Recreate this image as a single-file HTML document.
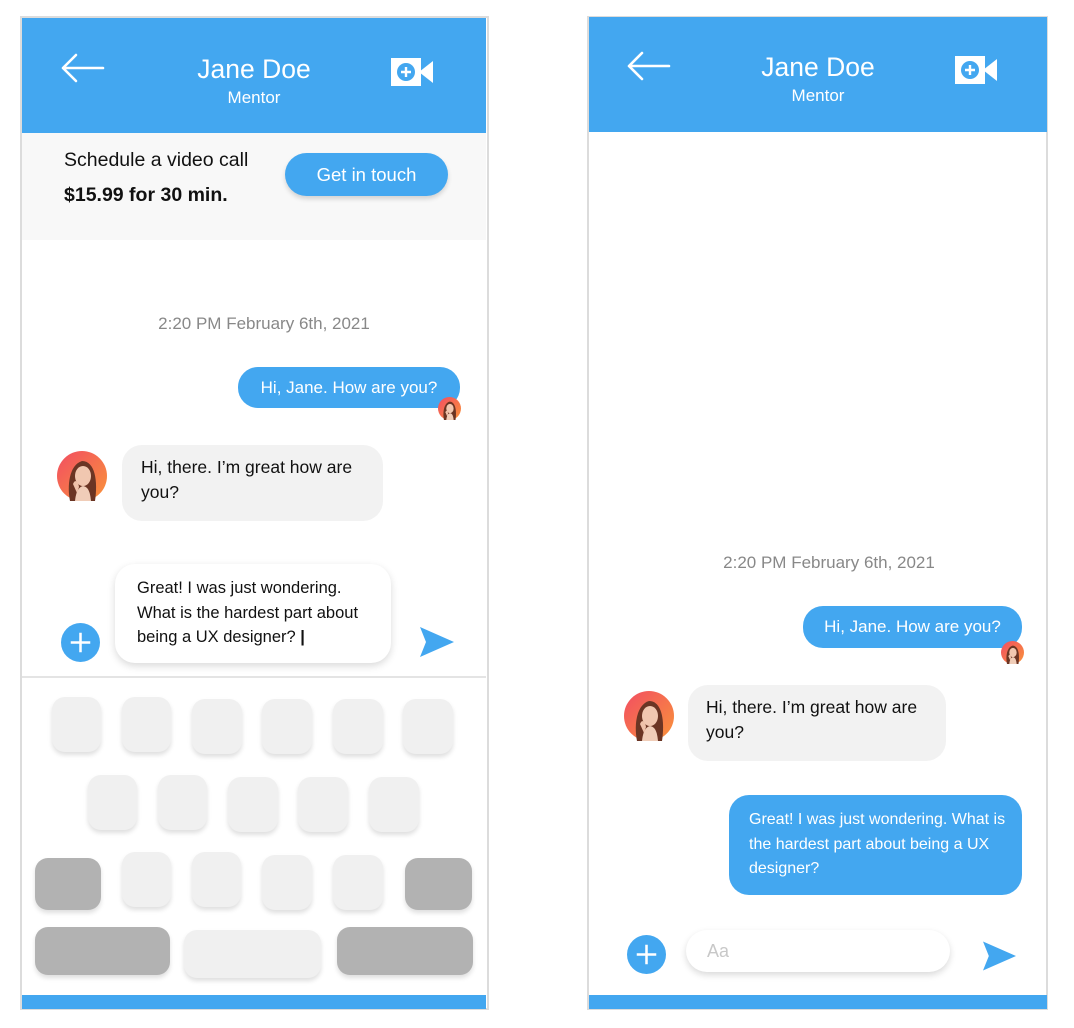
<!DOCTYPE html>
<html><head><meta charset="utf-8"><style>
*{margin:0;padding:0;box-sizing:border-box}
body{width:1074px;height:1028px;background:#fff;position:relative;overflow:hidden;font-family:"Liberation Sans",sans-serif}
.a{position:absolute}
.frame{position:absolute;border:2px solid #dcdcdc;background:#fff}
.blue{background:#43a7f0}
.t{position:absolute;white-space:nowrap}
.title{color:#fff;font-size:26.5px;text-align:center;width:200px}
.sub{color:#fff;font-size:17px;text-align:center;width:200px}
.key{position:absolute;background:#f0f0f0;border-radius:13px;box-shadow:0 3px 5px rgba(0,0,0,.13)}
.gk{background:#b2b2b2}
.bub{position:absolute;border-radius:20px;font-size:17.5px;line-height:25px;white-space:nowrap}
</style></head><body>
<svg width="0" height="0" style="position:absolute"><defs>
<linearGradient id="ag" x1="0" y1="0" x2="1" y2="1"><stop offset="0" stop-color="#f24d62"/><stop offset="1" stop-color="#f9943a"/></linearGradient>
<symbol id="av" viewBox="0 0 50 50"><circle cx="25" cy="25" r="25" fill="url(#ag)"/><path d="M13 50 C10 35 12 14 25 10 C38 10 41 30 38 50Z" fill="#6b3524"/><ellipse cx="26" cy="25" rx="8" ry="10" fill="#f1c7b0"/><path d="M18 50 C19 40 22 36 26 35 C31 36 33 40 34 50Z" fill="#f0cdb8"/><path d="M16 33 C18 28 21 30 22 36 L20 42Z" fill="#efc2aa"/></symbol>
<symbol id="cam" viewBox="0 0 42 28"><rect x="0" y="0" width="30" height="28" fill="#fff"/><path d="M28 14 L42 3 L42 25Z" fill="#fff"/><circle cx="15" cy="14" r="9" fill="#43a7f0"/><path d="M15 9v10M10 14h10" stroke="#fff" stroke-width="2.4"/></symbol>
<symbol id="back" viewBox="0 0 44 30"><path d="M2 15H42M15 2L2 15L15 28" fill="none" stroke="#fff" stroke-width="2.6" stroke-linecap="round" stroke-linejoin="round"/></symbol>
<symbol id="send" viewBox="0 0 34 30"><path d="M0 0L34 15L0 30L6 15Z" fill="#43a7f0"/></symbol>
<symbol id="plus" viewBox="0 0 40 40"><circle cx="20" cy="20" r="20" fill="#43a7f0"/><path d="M20 10v20M10 20h20" stroke="#fff" stroke-width="2.6"/></symbol>
</defs></svg>

<!-- LEFT PHONE -->
<div class="frame" style="left:20px;top:16px;width:469px;height:994px"></div>
<div class="a blue" style="left:22px;top:18px;width:464px;height:115px"></div>
<svg class="a" style="left:61px;top:53px" width="44" height="30"><use href="#back"/></svg>
<div class="t title" style="left:154px;top:54px">Jane Doe</div>
<div class="t sub" style="left:154px;top:88px">Mentor</div>
<svg class="a" style="left:391px;top:58px" width="42" height="28"><use href="#cam"/></svg>
<div class="a" style="left:22px;top:133px;width:464px;height:107px;background:#f8f8f8"></div>
<div class="t" style="left:64px;top:149px;font-size:19.5px;color:#111">Schedule a video call</div>
<div class="t" style="left:64px;top:184px;font-size:19.5px;font-weight:bold;color:#111">$15.99 for 30 min.</div>
<div class="a blue" style="left:285px;top:153px;width:163px;height:43px;border-radius:22px;box-shadow:0 3px 5px rgba(0,0,0,.15);color:#fff;font-size:18.5px;text-align:center;line-height:43px">Get in touch</div>
<div class="t" style="left:134px;top:314px;width:260px;text-align:center;color:#888;font-size:17px">2:20 PM February 6th, 2021</div>
<div class="bub blue" style="left:238px;top:367px;width:222px;height:41px;color:#fff;text-align:center;line-height:41px;font-size:17px">Hi, Jane. How are you?</div>
<svg class="a" style="left:438px;top:397px" width="23" height="23"><use href="#av"/></svg>
<svg class="a" style="left:57px;top:451px" width="50" height="50"><use href="#av"/></svg>
<div class="bub" style="left:122px;top:445px;width:261px;height:76px;background:#f2f2f2;color:#111;padding:10px 19px">Hi, there. I’m great how are<br>you?</div>
<div class="bub" style="left:115px;top:564px;width:276px;height:99px;background:#fff;box-shadow:0 3px 8px rgba(0,0,0,.15);color:#111;font-size:16.5px;line-height:24.5px;padding:12px 22px">Great! I was just wondering.<br>What is the hardest part about<br>being a UX designer? <b>|</b></div>
<svg class="a" style="left:61px;top:623px" width="39" height="39"><use href="#plus"/></svg>
<svg class="a" style="left:420px;top:627px" width="34" height="30"><use href="#send"/></svg>
<div class="a" style="left:22px;top:676px;width:464px;height:2px;background:#e4e4e4"></div>
<div class="key" style="left:52px;top:697px;width:49px;height:55px"></div>
<div class="key" style="left:122px;top:697px;width:49px;height:55px"></div>
<div class="key" style="left:192px;top:699px;width:50px;height:55px"></div>
<div class="key" style="left:262px;top:699px;width:50px;height:55px"></div>
<div class="key" style="left:333px;top:699px;width:50px;height:55px"></div>
<div class="key" style="left:403px;top:699px;width:50px;height:55px"></div>
<div class="key" style="left:88px;top:775px;width:49px;height:55px"></div>
<div class="key" style="left:158px;top:775px;width:49px;height:55px"></div>
<div class="key" style="left:228px;top:777px;width:50px;height:55px"></div>
<div class="key" style="left:298px;top:777px;width:50px;height:55px"></div>
<div class="key" style="left:369px;top:777px;width:50px;height:55px"></div>
<div class="key gk" style="left:35px;top:858px;width:66px;height:52px"></div>
<div class="key" style="left:122px;top:852px;width:49px;height:55px"></div>
<div class="key" style="left:192px;top:852px;width:49px;height:55px"></div>
<div class="key" style="left:262px;top:855px;width:50px;height:55px"></div>
<div class="key" style="left:333px;top:855px;width:50px;height:55px"></div>
<div class="key gk" style="left:405px;top:858px;width:67px;height:52px"></div>
<div class="key gk" style="left:35px;top:927px;width:135px;height:48px"></div>
<div class="key" style="left:184px;top:930px;width:137px;height:48px"></div>
<div class="key gk" style="left:337px;top:927px;width:136px;height:48px"></div>
<div class="a blue" style="left:22px;top:995px;width:464px;height:14px"></div>

<!-- RIGHT PHONE -->
<div class="frame" style="left:587px;top:16px;width:461px;height:994px"></div>
<div class="a blue" style="left:589px;top:17px;width:458px;height:115px"></div>
<svg class="a" style="left:627px;top:51px" width="44" height="30"><use href="#back"/></svg>
<div class="t title" style="left:718px;top:52px">Jane Doe</div>
<div class="t sub" style="left:718px;top:86px">Mentor</div>
<svg class="a" style="left:955px;top:56px" width="42" height="28"><use href="#cam"/></svg>
<div class="t" style="left:699px;top:553px;width:260px;text-align:center;color:#888;font-size:17px">2:20 PM February 6th, 2021</div>
<div class="bub blue" style="left:803px;top:606px;width:219px;height:42px;color:#fff;text-align:center;line-height:42px;font-size:17px">Hi, Jane. How are you?</div>
<svg class="a" style="left:1001px;top:641px" width="23" height="23"><use href="#av"/></svg>
<svg class="a" style="left:624px;top:691px" width="50" height="50"><use href="#av"/></svg>
<div class="bub" style="left:688px;top:685px;width:258px;height:76px;background:#f2f2f2;color:#111;padding:10px 18px">Hi, there. I’m great how are<br>you?</div>
<div class="bub blue" style="left:729px;top:795px;width:293px;height:100px;color:#fff;font-size:16px;line-height:24.5px;padding:13px 0 13px 20px">Great! I was just wondering. What is<br>the hardest part about being a UX<br>designer?</div>
<svg class="a" style="left:627px;top:935px" width="39" height="39"><use href="#plus"/></svg>
<div class="a" style="left:686px;top:930px;width:264px;height:42px;border-radius:21px;background:#fff;box-shadow:0 3px 7px rgba(0,0,0,.15);color:#c8c8c8;font-size:18px;line-height:42px;padding-left:21px">Aa</div>
<svg class="a" style="left:983px;top:941px" width="33" height="30"><use href="#send"/></svg>
<div class="a blue" style="left:589px;top:995px;width:458px;height:14px"></div>
</body></html>
